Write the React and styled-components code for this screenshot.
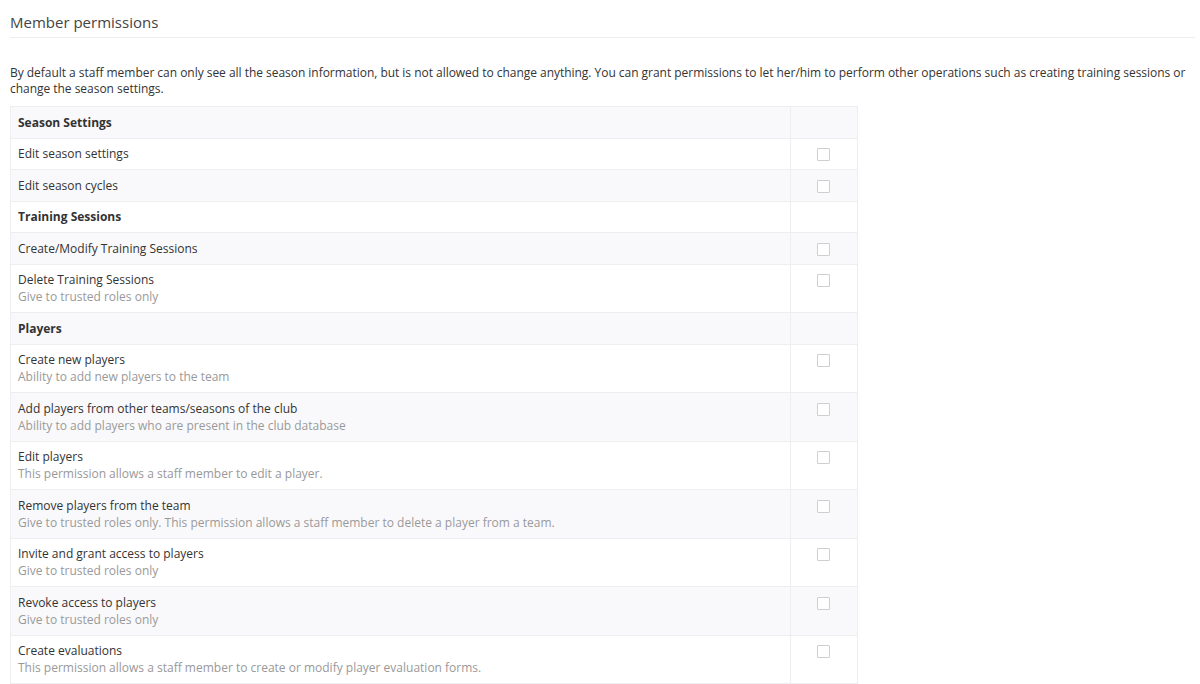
import styled, { createGlobalStyle } from "styled-components";

const GlobalStyle = createGlobalStyle`
  body {
    margin: 0;
    background: #fff;
    font-family: "Open Sans", "Noto Sans", sans-serif;
    color: #333;
  }
`;

const Page = styled.div`
  padding: 12px 5px 0 10px;
`;

const Title = styled.h3`
  margin: 0;
  padding-bottom: 5px;
  border-bottom: 1px solid #eeeeee;
  font-size: 15px;
  font-weight: 400;
  line-height: 20px;
  color: #444;
`;

const Intro = styled.p`
  margin: 27px 0 9px;
  font-size: 12px;
  line-height: 16px;
  letter-spacing: -0.03px;
`;

const Table = styled.table`
  width: 848px;
  border-collapse: collapse;
  font-size: 12px;
  line-height: 17px;
  border: 1px solid #eeeef0;
`;

const Row = styled.tr`
  &:nth-child(odd) {
    background: #f9f9fb;
  }
`;

const Cell = styled.td`
  padding: 6.75px 7px;
  border-top: 1px solid #eeeef0;
  vertical-align: top;
  font-weight: ${(p) => (p.$section ? 700 : 400)};
`;

const CheckCell = styled.td`
  width: 66px;
  padding: 9.5px 0 0;
  border: 1px solid #eeeef0;
  text-align: center;
  vertical-align: top;
`;

const Box = styled.span`
  display: inline-block;
  width: 11px;
  height: 11px;
  margin-right: 1px;
  border: 1px solid #cfcfcf;
  border-radius: 1px;
  background: #fff;
`;

const Hint = styled.div`
  color: #999;
`;

const rows = [
  { section: "Season Settings" },
  { title: "Edit season settings" },
  { title: "Edit season cycles" },
  { section: "Training Sessions" },
  { title: "Create/Modify Training Sessions" },
  { title: "Delete Training Sessions", hint: "Give to trusted roles only" },
  { section: "Players" },
  { title: "Create new players", hint: "Ability to add new players to the team" },
  {
    title: "Add players from other teams/seasons of the club",
    hint: "Ability to add players who are present in the club database",
  },
  { title: "Edit players", hint: "This permission allows a staff member to edit a player." },
  {
    title: "Remove players from the team",
    hint: "Give to trusted roles only. This permission allows a staff member to delete a player from a team.",
  },
  { title: "Invite and grant access to players", hint: "Give to trusted roles only" },
  { title: "Revoke access to players", hint: "Give to trusted roles only" },
  {
    title: "Create evaluations",
    hint: "This permission allows a staff member to create or modify player evaluation forms.",
  },
];

const App = () => (
  <Page>
    <GlobalStyle />
    <Title>Member permissions</Title>
    <Intro>
      By default a staff member can only see all the season information, but is not allowed to
      change anything. You can grant permissions to let her/him to perform other operations such as
      creating training sessions or change the season settings.
    </Intro>
    <Table>
      <tbody>
        {rows.map((r, i) =>
          r.section ? (
            <Row key={i}>
              <Cell $section>{r.section}</Cell>
              <CheckCell />
            </Row>
          ) : (
            <Row key={i}>
              <Cell>
                {r.title}
                {r.hint && <Hint>{r.hint}</Hint>}
              </Cell>
              <CheckCell>
                <Box />
              </CheckCell>
            </Row>
          )
        )}
      </tbody>
    </Table>
  </Page>
);

export default App;
